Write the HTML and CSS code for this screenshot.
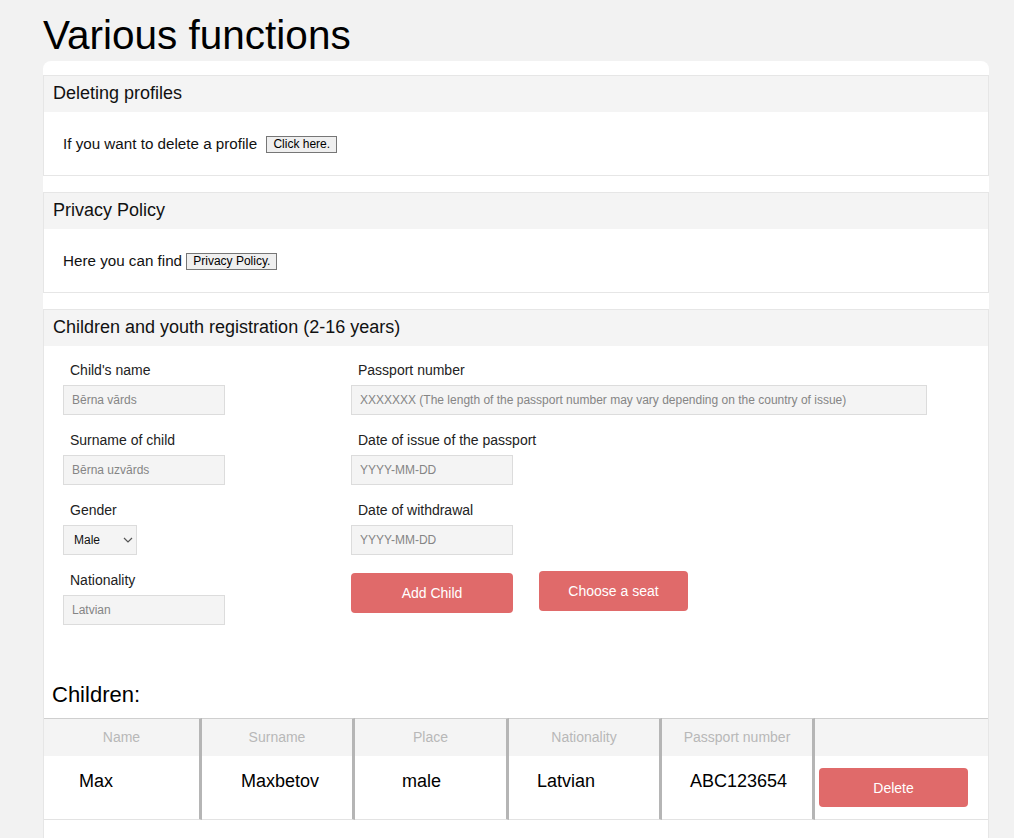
FILE: index.html
```html
<!DOCTYPE html>
<html lang="en">
<head>
<meta charset="utf-8">
<title>Various functions</title>
<link rel="stylesheet" href="styles.css">
</head>
<body>
<main class="page">
  <h1 class="title">Various functions</h1>
  <div class="card">
    <section class="panel">
      <h2 class="panel-head">Deleting profiles</h2>
      <div class="panel-body">If you want to delete a profile <button class="plain-btn gap-btn">Click here.</button></div>
    </section>
    <section class="panel">
      <h2 class="panel-head">Privacy Policy</h2>
      <div class="panel-body">Here you can find <button class="plain-btn">Privacy Policy.</button></div>
    </section>
    <section class="panel panel-last">
      <h2 class="panel-head">Children and youth registration (2-16 years)</h2>
      <div class="form-grid">
        <div class="col col-left">
          <div class="field">
            <label class="lbl">Child's name</label>
            <input class="inp inp-short" type="text" placeholder="Bērna vārds">
          </div>
          <div class="field">
            <label class="lbl">Surname of child</label>
            <input class="inp inp-short" type="text" placeholder="Bērna uzvārds">
          </div>
          <div class="field">
            <label class="lbl">Gender</label>
            <div class="sel-wrap">
              <select class="sel"><option>Male</option><option>Female</option></select>
              <svg class="chev" width="10" height="6" viewBox="0 0 10 6"><path d="M1 1 L5 5 L9 1" fill="none" stroke="#555" stroke-width="1.2"/></svg>
            </div>
          </div>
          <div class="field">
            <label class="lbl">Nationality</label>
            <input class="inp inp-short" type="text" placeholder="Latvian">
          </div>
        </div>
        <div class="col col-right">
          <div class="field">
            <label class="lbl">Passport number</label>
            <input class="inp inp-long" type="text" placeholder="XXXXXXX (The length of the passport number may vary depending on the country of issue)">
          </div>
          <div class="field">
            <label class="lbl">Date of issue of the passport</label>
            <input class="inp inp-short" type="text" placeholder="YYYY-MM-DD">
          </div>
          <div class="field">
            <label class="lbl">Date of withdrawal</label>
            <input class="inp inp-short" type="text" placeholder="YYYY-MM-DD">
          </div>
          <div class="btn-row">
            <button class="red-btn add-btn">Add Child</button>
            <button class="red-btn seat-btn">Choose a seat</button>
          </div>
        </div>
      </div>
      <h3 class="children-title">Children:</h3>
      <table class="kids">
        <thead>
          <tr>
            <th class="c1">Name</th>
            <th class="c2">Surname</th>
            <th class="c3">Place</th>
            <th class="c4">Nationality</th>
            <th class="c5">Passport number</th>
            <th class="c6"></th>
          </tr>
        </thead>
        <tbody>
          <tr>
            <td class="d1">Max</td>
            <td class="d2">Maxbetov</td>
            <td class="d3">male</td>
            <td class="d4">Latvian</td>
            <td class="d5">ABC123654</td>
            <td class="d6"><button class="red-btn del-btn">Delete</button></td>
          </tr>
        </tbody>
      </table>
    </section>
  </div>
</main>
</body>
</html>
```
FILE: styles.css
```css
* { box-sizing: border-box; }
html, body {
  margin: 0;
  padding: 0;
  background: #f2f2f2;
  font-family: "Liberation Sans", Arial, sans-serif;
  color: #111;
}
.page {
  padding: 12px 25px 0 43px;
}
.title {
  margin: 0 0 3px 0;
  font-size: 40.5px;
  line-height: 46px;
  font-weight: normal;
  color: #000;
}
.card {
  width: 946px;
  background: #fff;
  border-radius: 8px 8px 0 0;
  padding-top: 14px;
  min-height: 800px;
}
.panel {
  border: 1px solid #e6e6e6;
  margin-bottom: 16px;
}
.panel-last {
  border-bottom: none;
  margin-bottom: 0;
  min-height: 530px;
}
.panel-head {
  margin: 0;
  height: 36px;
  line-height: 34px;
  background: #f4f4f4;
  font-size: 18px;
  font-weight: normal;
  padding-left: 9px;
  color: #111;
}
.panel-body {
  padding: 22px 19px;
  font-size: 15.2px;
  line-height: 19px;
  color: #111;
}
.plain-btn {
  font-family: "Liberation Sans", Arial, sans-serif;
  font-size: 12px;
  line-height: 13px;
  padding: 1px 6px;
  background: #efefef;
  border: 1px solid #767676;
  border-radius: 0;
  color: #000;
  vertical-align: 1px;
}
.gap-btn { margin-left: 5px; }

.form-grid {
  display: flex;
  padding: 15px 19px 0 19px;
}
.col { display: flex; flex-direction: column; }
.col-left { width: 288px; }
.field {
  display: flex;
  flex-direction: column;
  align-items: flex-start;
  margin-bottom: 16px;
}
.lbl {
  font-size: 14px;
  line-height: 18px;
  padding-left: 7px;
  margin-bottom: 6px;
  color: #222;
}
.inp {
  height: 30px;
  background: #f4f4f4;
  border: 1px solid #dcdcdc;
  padding: 0 8px;
  font-family: "Liberation Sans", Arial, sans-serif;
  font-size: 12px;
  color: #333;
  outline: none;
}
.inp::placeholder { color: #858585; }
.inp-short { width: 162px; }
.inp-long { width: 576px; }
.sel-wrap {
  position: relative;
  width: 74px;
  height: 30px;
}
.sel {
  appearance: none;
  -webkit-appearance: none;
  width: 74px;
  height: 30px;
  background: #f4f4f4;
  border: 1px solid #dcdcdc;
  border-radius: 0;
  padding: 0 10px;
  font-family: "Liberation Sans", Arial, sans-serif;
  font-size: 12px;
  color: #111;
}
.chev {
  position: absolute;
  right: 4px;
  top: 12px;
  pointer-events: none;
}
.btn-row {
  display: flex;
  align-items: flex-start;
  gap: 26px;
  margin-top: 0;
}
.red-btn {
  background: #e06a6a;
  color: #fff;
  border: none;
  border-radius: 4px;
  font-family: "Liberation Sans", Arial, sans-serif;
  font-size: 14px;
  cursor: pointer;
}
.add-btn { width: 162px; height: 40px; margin-top: 2px; padding-top: 1px; }
.seat-btn { width: 149px; height: 40px; }

.children-title {
  margin: 41px 0 11px 0;
  padding-left: 8px;
  font-size: 22px;
  line-height: 25px;
  font-weight: normal;
  color: #000;
}
.kids {
  width: 944px;
  table-layout: fixed;
  border-collapse: separate;
  border-spacing: 0;
}
.kids th {
  height: 38px;
  background: #f4f4f4;
  border-top: 1px solid #cfcfcf;
  font-size: 14px;
  font-weight: normal;
  color: #b8b8b8;
  text-align: center;
  vertical-align: middle;
  padding: 0 0 1px 0;
}
.kids td {
  height: 64px;
  border-bottom: 1px solid #e3e3e3;
  font-size: 18px;
  line-height: 21px;
  color: #000;
  vertical-align: top;
  padding-top: 15px;
  text-align: left;
}
.kids .c1, .kids .c2, .kids .c3, .kids .c4, .kids .c5,
.kids .d1, .kids .d2, .kids .d3, .kids .d4, .kids .d5 {
  border-right: 3px solid #b5b5b5;
}
.c1 { width: 158px; }
.c2 { width: 153px; }
.c3 { width: 154px; }
.c4 { width: 153px; }
.c5 { width: 153px; }
.d1 { padding-left: 35px; }
.d2 { padding-left: 39px; }
.d3 { padding-left: 47px; }
.d4 { padding-left: 28px; }
.d5 { padding-left: 28px; }
.kids .d6 { padding-top: 12px; padding-left: 4px; }
.del-btn { width: 149px; height: 39px; padding-top: 2px; }
```
